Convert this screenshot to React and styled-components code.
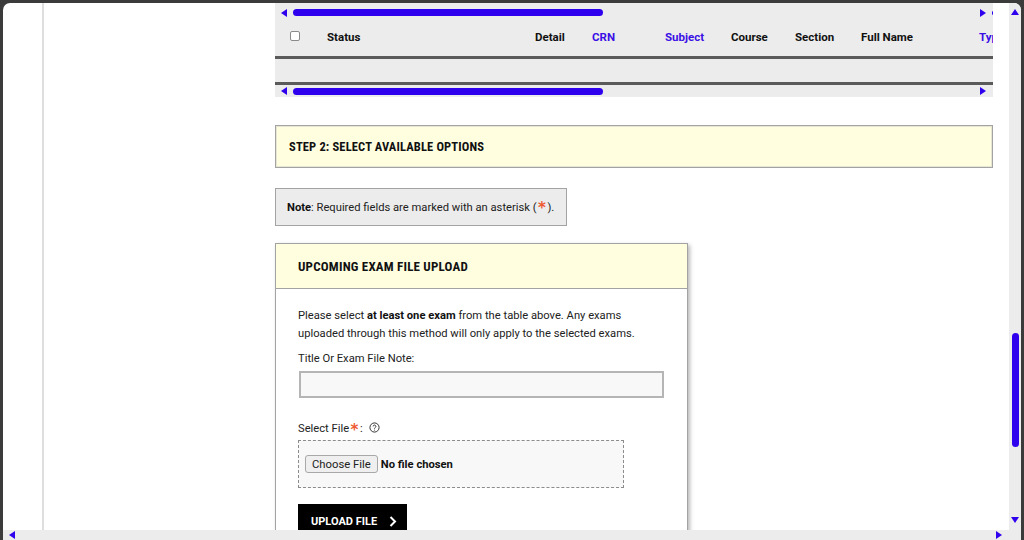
import React from 'react'
import styled, { createGlobalStyle } from 'styled-components'

const Global = createGlobalStyle`
  html, body {
    margin: 0;
    height: 100%;
    overflow: hidden;
    background: #3b3b3b;
    font-family: Roboto, "Liberation Sans", sans-serif;
    color: #111;
  }
  * { box-sizing: border-box; }
`

const Frame = styled.div`
  width: 1024px;
  height: 540px;
  padding: 3px 3px 0;
  overflow: hidden;
`
const Viewport = styled.div`
  height: 537px;
  display: grid;
  grid-template-columns: 1fr 12px;
  grid-template-rows: 1fr 10px;
  background: #fff;
  border-radius: 7px 7px 0 0;
  overflow: hidden;
`
const Page = styled.main`
  display: flex;
  overflow: hidden;
  min-width: 0;
  min-height: 0;
`
const Rail = styled.div`
  width: 41px;
  flex-shrink: 0;
  border-right: 2px solid #dedede;
`
const Content = styled.div`
  width: 718px;
  margin-left: 231px;
  flex-shrink: 0;
`

const Arrow = styled.span`
  width: 0;
  height: 0;
  flex-shrink: 0;
  border-style: solid;
  border-color: transparent;
  ${(p) => p.dir === 'left' && 'border-width: 4.5px 6px 4.5px 0; border-right-color: #2f00ee;'}
  ${(p) => p.dir === 'right' && 'border-width: 4.5px 0 4.5px 6px; border-left-color: #2f00ee;'}
  ${(p) => p.dir === 'up' && 'border-width: 0 4.5px 6px; border-bottom-color: #2f00ee;'}
  ${(p) => p.dir === 'down' && 'border-width: 6px 4.5px 0; border-top-color: #2f00ee;'}
`
const TableScroll = styled.div`
  height: ${(p) => p.h}px;
  display: flex;
  align-items: center;
  padding: 0 7px 0 6px;
  background: #ececec;
  overflow: hidden;
`
const Thumb = styled.div`
  width: 310px;
  height: 7px;
  margin-left: 6px;
  border-radius: 4px;
  background: #2f00ee;
`
const Push = styled.div`
  flex: 1;
`
// the next column's scroll arrow just peeks in at the right edge of the strip
const ClippedArrow = styled(Arrow)`
  margin-left: 6px;
  margin-right: -9px;
  border-width: 2.5px 0 2.5px 3px;
  border-left-color: #2f00ee;
`
const HeaderRow = styled.div`
  height: 34px;
  padding: 0 0 5px 15px;
  display: grid;
  grid-template-columns: 37px 208px 57px 73px 66px 64px 66px 118px 40px;
  align-items: center;
  background: #ececec;
  overflow: hidden;
  font-size: 11.5px;
  font-weight: 700;
  white-space: nowrap;
`
const HeadCell = styled.span`
  color: ${(p) => (p.link ? '#3a10e5' : '#111')};
`
const Check = styled.span`
  width: 10px;
  height: 10px;
  margin-top: -1px;
  background: #fff;
  border: 1px solid #8a8a8a;
  border-radius: 2px;
`
const TableBody = styled.div`
  height: 29px;
  background: #ececec;
  border-top: 3px solid #5a5a5a;
  border-bottom: 3px solid #5a5a5a;
`

const StepBox = styled.h2`
  height: 43px;
  margin: 28px 0 20px;
  padding: 0 13px;
  display: flex;
  align-items: center;
  background: #ffffe0;
  border: 1px solid #a3a3a3;
  box-shadow: inset 0 0 0 1px #e6e6d2;
  font-size: 12.5px;
  font-weight: 700;
  font-stretch: condensed;
  letter-spacing: 0.15px;
  color: #111;
`
const NoteBox = styled.p`
  width: 292px;
  height: 38px;
  margin: 0 0 17px;
  padding: 0 11px;
  display: flex;
  align-items: center;
  background: #ececec;
  border: 1px solid #a3a3a3;
  font-size: 11.2px;
  color: #222;
  white-space: pre;
  b { color: #111; }
`
const Asterisk = styled.span`
  color: #ee5a32;
  font-family: "DejaVu Sans", sans-serif;
  font-size: 15px;
  font-weight: 700;
  line-height: 10px;
  margin: 0 1.5px;
  position: relative;
  top: 1px;
`
const Card = styled.section`
  width: 413px;
  background: #fff;
  border: 1px solid #a3a3a3;
  box-shadow: 2px 2px 4px rgba(0, 0, 0, 0.28);
`
const CardHead = styled.h3`
  height: 45px;
  margin: 0;
  padding: 0 22px;
  display: flex;
  align-items: center;
  background: #ffffe0;
  border-bottom: 1px solid #a3a3a3;
  font-size: 13px;
  font-weight: 700;
  font-stretch: condensed;
  letter-spacing: 0.2px;
  color: #111;
`
const CardBody = styled.div`
  padding: 18px 22px 0;
  font-size: 11.2px;
  color: #222;
`
const Intro = styled.p`
  margin: 0 0 8px;
  line-height: 18px;
  b { color: #111; }
`
const Label = styled.label`
  display: flex;
  align-items: center;
  height: 15px;
  white-space: pre;
`
const TextInput = styled.div`
  width: 365px;
  height: 27px;
  margin: 5px 0 23px 1px;
  background: #f8f8f8;
  border: 2px solid #b5b5b5;
`
const HelpIcon = styled.svg`
  width: 11px;
  height: 11px;
  margin-left: 6px;
  margin-top: -3px;
`
const DropZone = styled.div`
  width: 326px;
  height: 48px;
  margin-top: 4px;
  padding-left: 6px;
  display: flex;
  align-items: center;
  gap: 3px;
  background: #f8f8f8;
  border: 1px dashed #8c8c8c;
`
const ChooseButton = styled.span`
  height: 18px;
  padding: 0 6px;
  display: flex;
  align-items: center;
  background: #efefef;
  border: 1px solid #a8a8a8;
  border-radius: 3px;
  font-size: 11.3px;
  color: #222;
`
const NoFile = styled.span`
  font-size: 11.2px;
  font-weight: 700;
  color: #111;
`
const UploadButton = styled.div`
  width: 109px;
  height: 34px;
  margin-top: 16px;
  padding-left: 13px;
  display: flex;
  align-items: center;
  gap: 12px;
  background: #000;
  color: #fff;
  font-size: 11px;
  font-weight: 700;
`

const VScroll = styled.div`
  display: flex;
  flex-direction: column;
  align-items: center;
  background: #ececec;
  padding: 6px 0 7px;
`
const VThumb = styled.div`
  width: 7px;
  height: 114px;
  margin-top: 318px;
  border-radius: 4px;
  background: #2f00ee;
`
const HScroll = styled.div`
  grid-column: 1 / 3;
  display: flex;
  align-items: center;
  justify-content: space-between;
  padding: 0 19px 0 6px;
  background: #ececec;
`

const columns = [
  { label: 'Status' },
  { label: 'Detail' },
  { label: 'CRN', link: true },
  { label: 'Subject', link: true },
  { label: 'Course' },
  { label: 'Section' },
  { label: 'Full Name' },
  { label: 'Type', link: true },
]

export default function App() {
  return (
    <Frame>
      <Global />
      <Viewport>
        <Page>
          <Rail />
          <Content>
            <TableScroll h={19}>
              <Arrow dir="left" />
              <Thumb />
              <Push />
              <Arrow dir="right" />
              <ClippedArrow />
            </TableScroll>
            <HeaderRow>
              <Check />
              {columns.map((col) => (
                <HeadCell key={col.label} link={col.link}>
                  {col.label}
                </HeadCell>
              ))}
            </HeaderRow>
            <TableBody />
            <TableScroll h={12}>
              <Arrow dir="left" />
              <Thumb />
              <Push />
              <Arrow dir="right" />
            </TableScroll>

            <StepBox>STEP 2: SELECT AVAILABLE OPTIONS</StepBox>
            <NoteBox>
              <b>Note</b>: Required fields are marked with an asterisk (<Asterisk>*</Asterisk>).
            </NoteBox>

            <Card>
              <CardHead>UPCOMING EXAM FILE UPLOAD</CardHead>
              <CardBody>
                <Intro>
                  Please select <b>at least one exam</b> from the table above. Any exams
                  <br />
                  uploaded through this method will only apply to the selected exams.
                </Intro>
                <Label>Title Or Exam File Note:</Label>
                <TextInput />
                <Label>
                  Select File<Asterisk>*</Asterisk>:
                  <HelpIcon viewBox="0 0 12 12" fill="none" stroke="#222" strokeWidth="1">
                    <circle cx="6" cy="6" r="5" />
                    <path d="M4.5 4.8a1.5 1.5 0 1 1 2.3 1.3c-.5.3-.8.6-.8 1.1" />
                    <path d="M6 8.4v.9" />
                  </HelpIcon>
                </Label>
                <DropZone>
                  <ChooseButton>Choose File</ChooseButton>
                  <NoFile>No file chosen</NoFile>
                </DropZone>
                <UploadButton>
                  UPLOAD FILE
                  <svg width="8" height="11" viewBox="0 0 8 11" fill="none" stroke="#fff" strokeWidth="2">
                    <path d="M1.5 1l4.5 4.5L1.5 10" />
                  </svg>
                </UploadButton>
              </CardBody>
            </Card>
          </Content>
        </Page>
        <VScroll>
          <Arrow dir="up" />
          <VThumb />
          <Push />
          <Arrow dir="down" />
        </VScroll>
        <HScroll>
          <Arrow dir="left" />
          <Arrow dir="right" />
        </HScroll>
      </Viewport>
    </Frame>
  )
}
